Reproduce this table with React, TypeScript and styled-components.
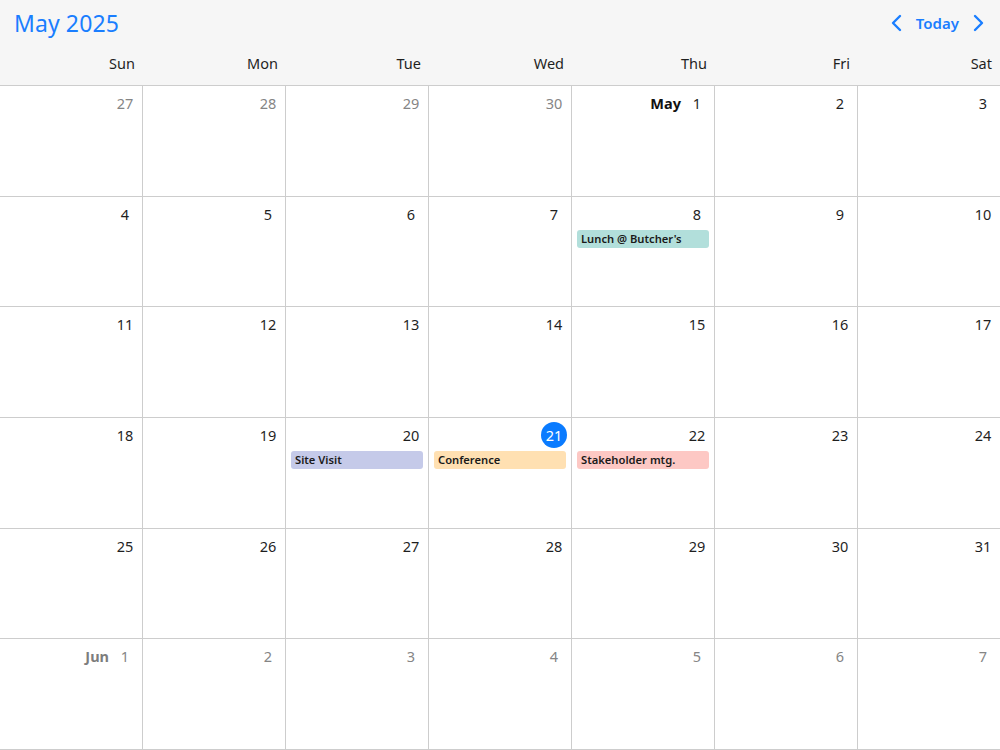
import React from "react";
import styled, { createGlobalStyle } from "styled-components";

const GlobalStyle = createGlobalStyle`
  html, body { margin: 0; padding: 0; background: #fff; }
  body { font-family: "Noto Sans", "Open Sans", "Liberation Sans", sans-serif; color: #1f1f1f; }
  * { box-sizing: border-box; }
`;

const columns = "repeat(6, 143px) 142px";

const Page = styled.div`
  width: 1000px;
  height: 750px;
  display: flex;
  flex-direction: column;
  overflow: hidden;
`;

const Header = styled.header`
  background: #f6f6f6;
  border-bottom: 1px solid #cdcdcd;
  height: 86px;
  display: flex;
  flex-direction: column;
`;

const TitleBar = styled.div`
  height: 46px;
  display: flex;
  align-items: center;
  justify-content: space-between;
  padding: 0 15px 0 14px;
`;

const Title = styled.h1`
  margin: 0;
  font-size: 23px;
  font-weight: 400;
  color: #1a7eff;
  letter-spacing: 0.1px;
`;

const Nav = styled.div`
  display: flex;
  align-items: center;
  gap: 12px;
`;

const NavButton = styled.button`
  border: none;
  background: none;
  padding: 0;
  margin: 0;
  display: flex;
  align-items: center;
  color: #1a7eff;
  font-family: inherit;
  font-size: 15px;
  font-weight: 600;
  cursor: pointer;
`;

const WeekdayRow = styled.div`
  flex: 1;
  display: grid;
  grid-template-columns: ${columns};
  align-items: center;
  padding-bottom: 5px;
`;

const Weekday = styled.div`
  text-align: right;
  padding-right: 8px;
  font-size: 14.5px;
  color: #1f1f1f;
`;

const Grid = styled.div`
  flex: 1;
  display: grid;
  grid-template-columns: ${columns};
  grid-template-rows: repeat(6, 1fr);
`;

const Cell = styled.div<{ $last: boolean }>`
  border-right: ${(p) => (p.$last ? "none" : "1px solid #cdcdcd")};
  border-bottom: 1px solid #cdcdcd;
  display: flex;
  flex-direction: column;
  min-width: 0;
`;

const DayHead = styled.div`
  display: flex;
  justify-content: flex-end;
  align-items: center;
  padding: 4px 4px 0 0;
  height: 30px;
`;

const MonthLabel = styled.span<{ $muted: boolean }>`
  font-size: 14.5px;
  font-weight: 700;
  color: ${(p) => (p.$muted ? "#7d7d7d" : "#111")};
  margin-right: 3px;
`;

const DayNum = styled.span<{ $muted: boolean; $today: boolean }>`
  width: 26px;
  height: 26px;
  border-radius: 50%;
  display: flex;
  align-items: center;
  justify-content: center;
  font-size: 14.5px;
  background: ${(p) => (p.$today ? "#0a7bff" : "transparent")};
  color: ${(p) => (p.$today ? "#fff" : p.$muted ? "#858585" : "#1f1f1f")};
`;

const Event = styled.div<{ $bg: string }>`
  margin: 3px 5px 0 5px;
  height: 18px;
  border-radius: 3px;
  background: ${(p) => p.$bg};
  font-size: 11.2px;
  font-weight: 600;
  color: #1a1a1a;
  padding: 0 4px;
  display: flex;
  align-items: center;
  white-space: nowrap;
  overflow: hidden;
`;

const Chevron = ({ dir }: { dir: "left" | "right" }) => (
  <svg width="14" height="18" viewBox="0 0 14 18" fill="none">
    <polyline
      points={dir === "left" ? "10,2 3,9 10,16" : "4,2 11,9 4,16"}
      stroke="#1a7eff"
      strokeWidth="2.4"
      strokeLinecap="round"
      strokeLinejoin="round"
    />
  </svg>
);

type Day = { n: number; muted: boolean; month?: string; today?: boolean };

const events: Record<number, { label: string; bg: string }> = {
  8: { label: "Lunch @ Butcher's", bg: "#b2dfdb" },
  20: { label: "Site Visit", bg: "#c5cae9" },
  21: { label: "Conference", bg: "#ffe0b2" },
  22: { label: "Stakeholder mtg.", bg: "#fdc8c4" },
};

const buildDays = (): Day[] => {
  const days: Day[] = [];
  [27, 28, 29, 30].forEach((n) => days.push({ n, muted: true }));
  for (let n = 1; n <= 31; n++) {
    days.push({ n, muted: false, month: n === 1 ? "May" : undefined, today: n === 21 });
  }
  for (let n = 1; n <= 7; n++) {
    days.push({ n, muted: true, month: n === 1 ? "Jun" : undefined });
  }
  return days;
};

const weekdays = ["Sun", "Mon", "Tue", "Wed", "Thu", "Fri", "Sat"];

export default function App() {
  const days = buildDays();
  return (
    <>
      <GlobalStyle />
      <Page>
        <Header>
          <TitleBar>
            <Title>May 2025</Title>
            <Nav>
              <NavButton aria-label="Previous month">
                <Chevron dir="left" />
              </NavButton>
              <NavButton>Today</NavButton>
              <NavButton aria-label="Next month">
                <Chevron dir="right" />
              </NavButton>
            </Nav>
          </TitleBar>
          <WeekdayRow>
            {weekdays.map((w) => (
              <Weekday key={w}>{w}</Weekday>
            ))}
          </WeekdayRow>
        </Header>
        <Grid>
          {days.map((d, i) => {
            const ev = !d.muted ? events[d.n] : undefined;
            return (
              <Cell key={i} $last={i % 7 === 6}>
                <DayHead>
                  {d.month && <MonthLabel $muted={d.muted}>{d.month}</MonthLabel>}
                  <DayNum $muted={d.muted} $today={!!d.today}>
                    {d.n}
                  </DayNum>
                </DayHead>
                {ev && <Event $bg={ev.bg}>{ev.label}</Event>}
              </Cell>
            );
          })}
        </Grid>
      </Page>
    </>
  );
}
